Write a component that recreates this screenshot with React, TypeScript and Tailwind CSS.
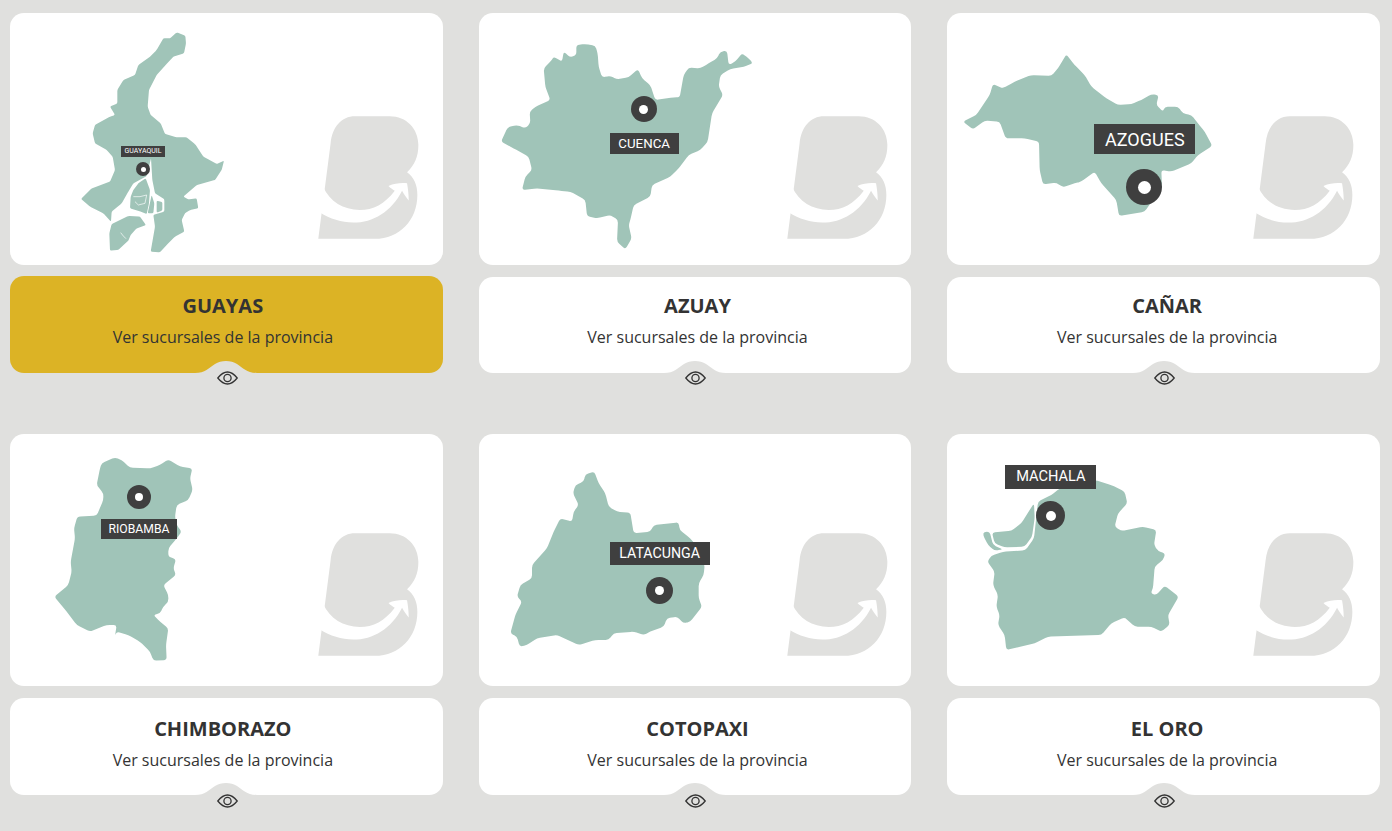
const provinces = [
  {
    name: "GUAYAS",
    active: true,
    corner: 4,
    viewBox: "30 39 1298 756",
    shapes: [
      "M530 97 L556 107 L558 130 L552 160 L520 170 L497 195 L470 225 L447 270 L443 320 L452 345 L482 370 L495 402 L530 412 L560 412 L585 432 L610 470 L650 492 L672 482 L665 510 L645 540 L590 555 L550 590 L565 598 L590 595 L595 625 L570 630 L555 640 L545 660 L553 695 L525 710 L500 735 L480 757 L452 755 L465 680 L460 645 L493 635 L493 598 L465 580 L457 540 L453 475 L440 528 L400 550 L385 575 L365 610 L335 635 L333 665 L310 640 L270 620 L243 597 L275 565 L330 545 L345 510 L338 470 L320 450 L285 430 L278 400 L285 375 L330 350 L345 345 L330 320 L352 310 L352 270 L370 240 L405 225 L415 195 L450 170 L470 150 L490 115 L510 115 Z",
      "M437 535 L450 570 L447 610 L440 642 L425 636 L390 625 L392 590 L400 570 L415 550 Z",
      "M455 585 L463 610 L460 640 L443 640 Z",
      "M470 602 L487 606 L487 632 L470 638 Z",
      "M328 700 L335 672 L385 648 L420 650 L438 675 L410 685 L392 705 L385 722 L355 750 L330 752 Z",
    ],
    lines: ["M400 590 L420 590 L440 585 L435 610 L415 615 L405 605", "M362 698 L370 708 L378 716"],
    logo: "left-[290px] top-[87px]",
    textOffset: "mt-[11px] h-[97px] bg-[#dcb325] pt-[18px] pr-[7px]",
    eye: "ml-[3px] -mt-[2px]",
    pin: "left-[126px] top-[149px] size-[14px]",
    dot: "size-[5px]",
    label: "left-[111px] top-[133px] w-[44px] h-[11px] text-[7px]",
    city: "GUAYAQUIL",
  },
  {
    name: "AZUAY",
    viewBox: "26 39 1298 756",
    shapes: [
      "M318 135 L345 132 L375 137 L382 160 L385 200 L395 232 L420 228 L440 238 L475 232 L503 207 L515 235 L540 255 L555 300 L610 292 L628 292 L640 225 L655 203 L690 205 L715 190 L740 175 L750 155 L770 152 L775 195 L795 185 L815 160 L835 175 L848 190 L820 200 L780 207 L750 225 L745 260 L758 285 L725 340 L712 425 L690 450 L655 465 L625 505 L600 530 L545 555 L540 590 L490 615 L480 660 L475 675 L484 715 L465 748 L440 725 L443 660 L420 645 L380 655 L350 648 L345 600 L300 575 L265 572 L200 565 L155 570 L165 530 L185 510 L175 470 L130 445 L92 425 L112 382 L140 375 L165 385 L180 370 L178 335 L195 320 L240 300 L225 260 L220 205 L245 180 L250 170 L275 185 L280 155 L300 172 L318 165 Z",
    ],
    logo: "left-[290px] top-[87px]",
    textOffset: "mt-[12px] h-[96px] bg-white pt-[17px] pl-[5px]",
    eye: "ml-[1px] -mt-[2px]",
    pin: "left-[152px] top-[83px] size-[26px]",
    dot: "size-[9px]",
    label: "left-[131px] top-[120px] w-[69px] h-[21px] text-[13.3px]",
    city: "CUENCA",
  },
  {
    name: "CAÑAR",
    viewBox: "37 39 1298 756",
    shapes: [
      "M395 163 L420 195 L450 225 L470 260 L515 295 L550 315 L590 312 L620 300 L650 283 L672 285 L665 315 L685 335 L690 320 L730 320 L745 340 L770 345 L790 370 L810 395 L833 438 L790 465 L770 490 L710 515 L680 510 L682 560 L630 635 L553 648 L545 600 L500 550 L480 515 L440 545 L420 550 L385 562 L365 548 L325 553 L315 510 L313 425 L270 415 L213 415 L195 365 L150 362 L115 388 L85 365 L125 345 L165 285 L175 252 L205 265 L240 245 L290 225 L350 228 L370 205 Z",
    ],
    logo: "left-[288px] top-[87px]",
    textOffset: "mt-[12px] h-[96px] bg-white pt-[17px] pl-[7px]",
    eye: "ml-[1px] -mt-[2px]",
    pin: "left-[179px] top-[156px] size-[36px]",
    dot: "size-[13px]",
    label: "left-[147px] top-[111px] w-[101px] h-[30px] text-[18px]",
    city: "AZOGUES",
  },
  {
    name: "CHIMBORAZO",
    viewBox: "30 27 1298 756",
    shapes: [
      "M305 115 L345 97 L365 105 L390 128 L450 130 L480 120 L505 103 L540 125 L577 130 L570 160 L578 195 L565 225 L530 240 L525 275 L530 300 L545 320 L530 340 L505 370 L505 395 L528 402 L520 430 L528 450 L490 480 L505 510 L505 530 L490 545 L480 565 L460 570 L480 590 L505 610 L498 660 L500 705 L460 707 L450 680 L420 650 L385 630 L350 620 L345 633 L350 600 L320 600 L270 620 L230 600 L200 560 L163 515 L205 480 L215 440 L212 410 L225 340 L222 310 L232 275 L290 272 L310 225 L310 205 L290 180 L300 130 Z",
    ],
    logo: "left-[290px] top-[83px]",
    textOffset: "mt-[12px] h-[97px] bg-white pt-[19px] pr-[7px]",
    eye: "ml-[3px] -mt-[1px]",
    pin: "left-[117px] top-[51px] size-[24px]",
    dot: "size-[8px]",
    label: "left-[91px] top-[85px] w-[76px] h-[20px] text-[12.2px]",
    city: "RIOBAMBA",
  },
  {
    name: "COTOPAXI",
    viewBox: "26 27 1298 756",
    shapes: [
      "M372 140 L385 175 L405 205 L415 245 L440 260 L480 263 L490 325 L540 320 L550 300 L625 292 L628 315 L660 340 L680 365 L703 420 L700 450 L685 475 L685 520 L695 545 L660 590 L640 595 L620 575 L590 580 L580 605 L540 620 L520 630 L490 620 L430 625 L415 645 L375 645 L325 660 L260 630 L200 640 L170 660 L148 665 L140 635 L120 625 L135 570 L155 530 L140 515 L150 480 L185 460 L185 420 L230 370 L250 320 L270 280 L305 290 L310 260 L325 240 L308 205 L315 180 L340 170 L345 148 Z",
    ],
    logo: "left-[290px] top-[83px]",
    textOffset: "mt-[12px] h-[97px] bg-white pt-[19px] pl-[5px]",
    eye: "ml-[1px] -mt-[1px]",
    pin: "left-[167px] top-[143px] size-[27px]",
    dot: "size-[9px]",
    label: "left-[131px] top-[108px] w-[100px] h-[23px] text-[14.2px]",
    city: "LATACUNGA",
  },
  {
    name: "EL ORO",
    viewBox: "37 27 1298 756",
    shapes: [
      "M375 190 L480 165 L530 180 L570 200 L578 235 L550 265 L540 305 L560 318 L625 305 L665 315 L658 360 L670 378 L692 385 L685 405 L660 425 L655 490 L648 505 L665 510 L690 482 L732 515 L700 570 L705 600 L680 620 L650 605 L600 605 L570 577 L530 595 L500 630 L340 635 L300 655 L215 675 L210 630 L190 600 L195 570 L185 545 L190 510 L175 480 L180 440 L158 410 L170 392 L205 380 L272 376 L298 340 L304 285 L310 230 L350 210 Z",
      "M298 235 L300 280 L292 335 L270 365 L210 367 L180 355 L172 323 L230 317 L260 295 L285 255 Z",
      "M148 320 L165 320 L175 360 L205 373 L180 377 L160 360 L145 330 Z",
    ],
    logo: "left-[288px] top-[83px]",
    textOffset: "mt-[12px] h-[97px] bg-white pt-[19px] pl-[7px]",
    eye: "ml-[1px] -mt-[1px]",
    pin: "left-[89px] top-[67px] size-[29px]",
    dot: "size-[10px]",
    label: "left-[58px] top-[31px] w-[91px] h-[24px] text-[14.6px]",
    city: "MACHALA",
  },
]

// softens the corners of a traced outline so the coast doesn't look faceted
function soften(d: string, r = 9) {
  const nums = d.match(/-?\d+(\.\d+)?/g)!.map(Number)
  const pts: [number, number][] = []
  for (let i = 0; i < nums.length; i += 2) pts.push([nums[i], nums[i + 1]])
  const toward = (a: [number, number], b: [number, number]) => {
    const len = Math.hypot(b[0] - a[0], b[1] - a[1])
    const t = Math.min(r, len / 2) / len
    return [a[0] + (b[0] - a[0]) * t, a[1] + (b[1] - a[1]) * t]
  }
  let out = ""
  pts.forEach((p, i) => {
    const prev = pts[(i + pts.length - 1) % pts.length]
    const next = pts[(i + 1) % pts.length]
    const a = toward(p, prev)
    const b = toward(p, next)
    out += `${i === 0 ? "M" : "L"}${a[0]} ${a[1]} Q${p[0]} ${p[1]} ${b[0]} ${b[1]} `
  })
  return out + "Z"
}

function Logo({ className }: { className: string }) {
  return (
    <svg viewBox="0 0 400 450" className={`absolute w-[133px] h-[150px] ${className}`}>
      <path
        fill="#e0e0de"
        d="M55 417 L92 130 C97 80 125 48 165 48 L270 48 C320 48 356 85 356 135 C356 170 345 195 322 217 C343 232 353 255 353 285 C353 360 300 417 225 417 Z"
      />
      <path
        fill="#ffffff"
        d="M70 262 C90 305 130 330 180 330 C220 330 255 312 285 272 C278 268 272 264 266 258 C285 250 305 248 322 250 C325 268 327 285 327 302 C320 292 312 282 307 272 C275 335 220 368 160 368 C125 368 90 357 60 338 Z"
      />
    </svg>
  )
}

function EyeTab({ eye }: { eye: string }) {
  return (
    <div className="absolute left-1/2 top-full -translate-x-1/2 -mt-[13px] flex flex-col items-center">
      <svg viewBox="0 0 62 13" className="w-[62px] h-[13px]">
        <path fill="#e0e0de" d="M0 13 C10 13 14 8 20 4 C26 0 36 0 42 4 C48 8 52 13 62 13 Z" />
      </svg>
      <svg viewBox="0 0 21 14" fill="none" stroke="#333333" className={`w-[21px] h-[14px] ${eye}`}>
        <path strokeWidth="1.3" d="M0.8 7 C4 3 7 1 10.5 1 C14 1 17 3 20.2 7 C17 11 14 13 10.5 13 C7 13 4 11 0.8 7 Z" />
        <circle cx="10.5" cy="7" r="3.6" strokeWidth="1.3" />
      </svg>
    </div>
  )
}

export default function App() {
  return (
    <div className="min-h-screen bg-[#e0e0de] pt-[13px] pl-[10px] font-['Open_Sans',sans-serif] text-[#333333]">
      <div className="grid w-[1370px] grid-cols-3 gap-x-[36px] gap-y-[61px]">
        {provinces.map((p) => (
          <div key={p.name} className="flex flex-col">
            {/* Map */}
            <div className="relative h-[252px] overflow-hidden rounded-[14px] bg-white">
              <Logo className={p.logo} />
              <svg viewBox={p.viewBox} className="absolute inset-0 h-full w-full">
                {p.shapes.map((d) => (
                  <path key={d} d={soften(d, p.corner)} fill="#a0c4b8" />
                ))}
                {p.lines?.map((d) => (
                  <path key={d} d={d} fill="none" stroke="#ffffff" strokeWidth="2" />
                ))}
              </svg>
              <div className={`absolute flex items-center justify-center rounded-full bg-[#3f3f3f] ${p.pin}`}>
                <div className={`rounded-full bg-white ${p.dot}`} />
              </div>
              <div
                className={`absolute flex items-center justify-center bg-[#3f3f3f] font-['Roboto',sans-serif] text-white ${p.label}`}
              >
                {p.city}
              </div>
            </div>

            {/* Label */}
            <div className={`relative flex flex-col items-center rounded-[14px] ${p.textOffset}`}>
              <h3 className="text-[20px] font-bold leading-[24px]">{p.name}</h3>
              <p className="mt-[7px] text-[16px] leading-[24px]">Ver sucursales de la provincia</p>
              <EyeTab eye={p.eye} />
            </div>
          </div>
        ))}
      </div>
    </div>
  )
}
